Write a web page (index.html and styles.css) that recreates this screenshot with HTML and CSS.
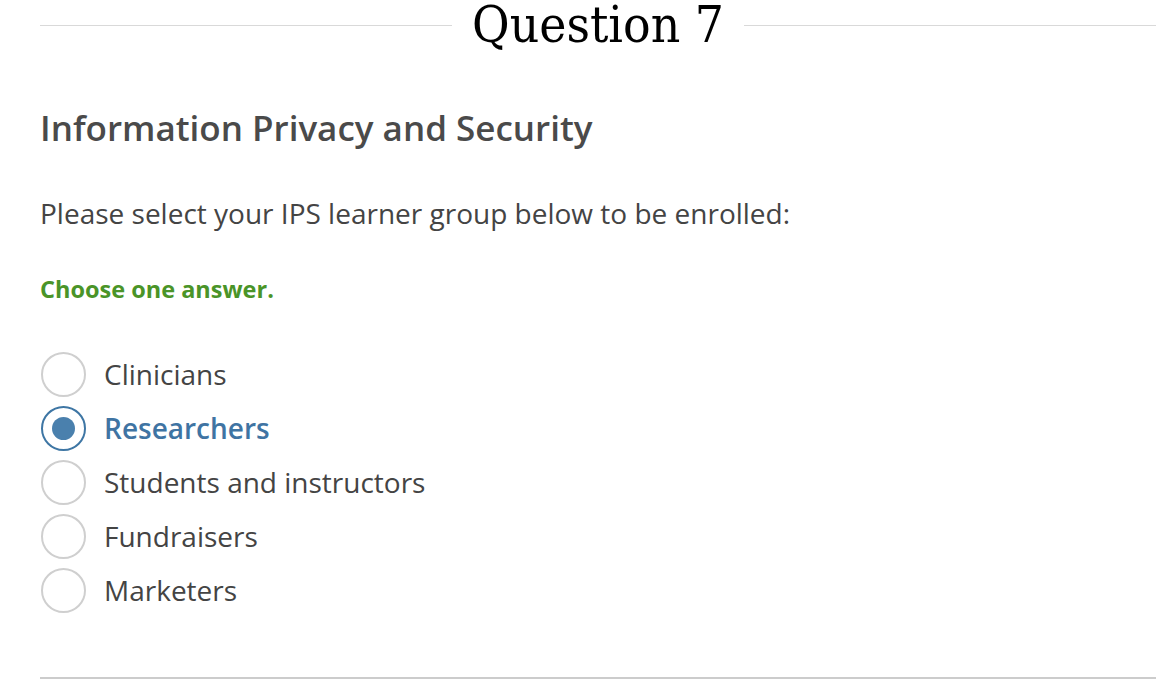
FILE: index.html
```html
<!DOCTYPE html>
<html>
<head>
<meta charset="utf-8">
<link rel="stylesheet" href="styles.css">
</head>
<body>
<div class="page">
  <div class="q-header">
    <span class="rule"></span>
    <h1 class="q-title">Question 7</h1>
    <span class="rule"></span>
  </div>
  <h2 class="topic">Information Privacy and Security</h2>
  <p class="prompt">Please select your IPS learner group below to be enrolled:</p>
  <p class="hint">Choose one answer.</p>
  <ul class="options">
    <li class="option"><span class="radio"></span><span class="label">Clinicians</span></li>
    <li class="option selected"><span class="radio"></span><span class="label">Researchers</span></li>
    <li class="option"><span class="radio"></span><span class="label">Students and instructors</span></li>
    <li class="option"><span class="radio"></span><span class="label">Fundraisers</span></li>
    <li class="option"><span class="radio"></span><span class="label">Marketers</span></li>
  </ul>
  <div class="bottom-rule"></div>
</div>
</body>
</html>
```

FILE: styles.css
```css
html, body {
  margin: 0;
  padding: 0;
  background: #fff;
}
.page {
  padding: 0 10px 0 40px;
  font-family: "Open Sans", "Liberation Sans", sans-serif;
  color: #444;
}
.q-header {
  display: flex;
  align-items: flex-start;
  gap: 20px;
  height: 48px;
  padding-top: 2px;
}
.rule {
  flex: 1;
  height: 1px;
  margin-top: 23px;
  background: #d9d9d9;
}
.q-title {
  margin: 0;
  font-family: "DejaVu Serif Condensed", "DejaVu Serif", "Liberation Serif", serif;
  font-stretch: condensed;
  font-weight: normal;
  font-size: 51px;
  line-height: 46px;
  color: #000;
}
.topic {
  margin: 56px 0 0;
  font-size: 35px;
  font-weight: 600;
  line-height: 44px;
  color: #4a4a4a;
}
.prompt {
  margin: 46px 0 0;
  font-size: 28px;
  line-height: 34px;
  color: #444;
}
.hint {
  margin: 44px 0 0;
  font-size: 23.5px;
  font-weight: 700;
  line-height: 30px;
  color: #4a9428;
}
.options {
  list-style: none;
  margin: 48px 0 0;
  padding: 0;
  display: flex;
  flex-direction: column;
  gap: 10px;
}
.option {
  display: flex;
  align-items: center;
  gap: 18px;
  height: 44px;
}
.radio {
  box-sizing: border-box;
  width: 45px;
  height: 45px;
  margin-left: 1px;
  border: 2px solid #cfcfcf;
  border-radius: 50%;
  display: flex;
  align-items: center;
  justify-content: center;
  flex: none;
}
.label {
  font-size: 28px;
  color: #444;
}
.selected .radio {
  border-color: #3e76a4;
}
.selected .radio::after {
  content: "";
  width: 23px;
  height: 23px;
  border-radius: 50%;
  background: #4a80ad;
}
.selected .label {
  font-weight: 600;
  color: #3f74a3;
}
.bottom-rule {
  margin-top: 65px;
  height: 2px;
  background: #cccccc;
}
```
